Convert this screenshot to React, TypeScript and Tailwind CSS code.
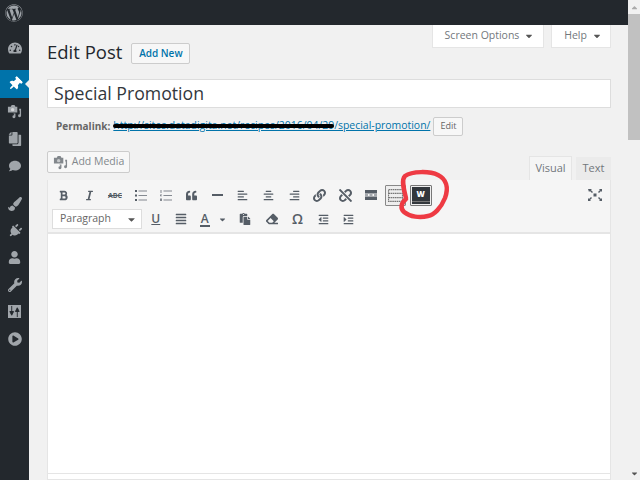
import type { ReactNode } from 'react';
import {
  FaWordpress, FaTachometerAlt, FaThumbtack, FaComment, FaPaintBrush, FaPlug, FaUser, FaWrench,
  FaPlayCircle, FaBold, FaItalic, FaQuoteLeft, FaAlignLeft, FaAlignCenter, FaAlignRight,
  FaLink, FaUnlink, FaAlignJustify, FaPaste, FaEraser, FaOutdent, FaIndent, FaCopy, FaCaretDown, FaCaretUp,
} from 'react-icons/fa';

const font = "font-['Open_Sans',sans-serif]";

function MediaIcon({ className }: { className?: string }) {
  return (
    <svg viewBox="0 0 16 16" className={className} fill="currentColor">
      <path d="M1 3h3l1-2h3l1 2h2v6H1z" />
      <circle cx="6" cy="6" r="1.800" fill="#fff" fillOpacity="0.55" />
      <path d="M13 5h2v7.500a1.600 1.600 0 1 1-1.400-1.600V7h-.6zM7 10h2v3.500a1.600 1.600 0 1 1-1.400-1.600V11H7z" />
    </svg>
  );
}

function SlidersIcon() {
  return (
    <svg viewBox="0 0 14 14" className="w-[13px] h-[13px]">
      <rect width="14" height="14" fill="#a0a5aa" />
      <path d="M4 1v8M2 7l2 4 2-4zM10 13V5M8 7l2-4 2 4z" fill="#23282d" stroke="#23282d" />
    </svg>
  );
}

function BulletList() {
  return (
    <svg viewBox="0 0 12 11" className="w-[12px] h-[11px]" fill="currentColor">
      <path d="M0 0h2v2H0zM0 4.500h2v2H0zM0 9h2v2H0z" />
      <path d="M3.500.500H12v1H3.500zM3.500 5H12v1H3.500zM3.500 9.500H12v1H3.500z" fillOpacity="0.7" />
    </svg>
  );
}

function NumberList() {
  return (
    <svg viewBox="0 0 12 11" className="w-[12px] h-[11px]" fill="currentColor">
      <path d="M.5 0h1v3h-1zM0 4.500h2v.6H1v.5h1v.6H0zM0 8.500h2v2.500H0z" fillOpacity="0.7" />
      <path d="M3.500.500H12v1H3.500zM3.500 5H12v1H3.500zM3.500 9.500H12v1H3.500z" fillOpacity="0.7" />
    </svg>
  );
}

const menuItems: { icon: ReactNode; cls: string }[] = [
  { icon: <FaTachometerAlt size={14} />, cls: 'mt-[9px]' },
  { icon: <FaThumbtack size={14} className="rotate-45" />, cls: 'mt-[9px] h-[28px] bg-[#0073aa] text-white' },
  { icon: <MediaIcon className="w-[15px] h-[15px]" />, cls: '' },
  { icon: <FaCopy size={14} className="scale-x-[-1]" />, cls: '' },
  { icon: <FaComment size={12} />, cls: '' },
  { icon: <FaPaintBrush size={14} />, cls: 'mt-[11px]' },
  { icon: <FaPlug size={14} className="rotate-45" />, cls: '' },
  { icon: <FaUser size={13} />, cls: '' },
  { icon: <FaWrench size={14} />, cls: '' },
  { icon: <SlidersIcon />, cls: '' },
  { icon: <FaPlayCircle size={14} />, cls: '' },
];

function Sidebar() {
  return (
    <div className="w-[29px] shrink-0 bg-[#23282d] text-[#a0a5aa] flex flex-col">
      {menuItems.map((m, i) => (
        <div key={i} className={`relative h-[27px] flex items-center justify-center ${m.cls}`}>
          {m.icon}
          {i === 1 && (
            <span className="absolute right-0 top-[10px] border-y-[4px] border-r-[4px] border-y-transparent border-r-[#f1f1f1]" />
          )}
        </div>
      ))}
    </div>
  );
}

function Tb({ children, cls = 'w-[25.6px]' }: { children: ReactNode; cls?: string }) {
  return <div className={`h-[20px] flex items-center justify-center shrink-0 text-[#555d66] ${cls}`}>{children}</div>;
}

function Toolbar() {
  return (
    <div className="h-[54px] shrink-0 bg-[#f5f5f5] border-b-2 border-[#e5e5e5] px-[3px] pt-[5px] flex flex-col">
      <div className="h-[20px] flex items-center">
        <Tb><FaBold size={11} /></Tb>
        <Tb><FaItalic size={11} /></Tb>
        <Tb><span className="text-[7px] font-bold line-through leading-none">ABC</span></Tb>
        <Tb><BulletList /></Tb>
        <Tb><NumberList /></Tb>
        <Tb><FaQuoteLeft size={11} /></Tb>
        <Tb><span className="block w-[11px] h-[2px] bg-[#555d66]" /></Tb>
        <Tb><FaAlignLeft size={11} /></Tb>
        <Tb><FaAlignCenter size={11} /></Tb>
        <Tb><FaAlignRight size={11} /></Tb>
        <Tb><FaLink size={13} /></Tb>
        <Tb><FaUnlink size={13} /></Tb>
        <Tb>
          <svg viewBox="0 0 12 10" className="w-[12px] h-[10px]" fill="currentColor">
            <path d="M0 0h12v3.500H0zM0 4.500h3v1H0zM4.500 4.500h3v1h-3zM9 4.500h3v1H9zM0 6.500h12V10H0z" />
          </svg>
        </Tb>
        <div className="w-[21px] h-[21px] ml-[1px] border border-[#888] rounded-[1px] bg-[#eee] flex items-center justify-center text-[#777]">
          <svg viewBox="0 0 14 12" className="w-[15px] h-[13px]" fill="none" stroke="currentColor" strokeWidth="1">
            <path d="M.5.500h13v11H.5zM.5 4h13M.5 8h13" strokeDasharray="1.500 .5" />
          </svg>
        </div>
        <div className="w-[22px] h-[21px] ml-[4px] border border-[#777] rounded-[1px] p-[1px] bg-[#eee]">
          <div className="w-full h-full bg-[#32373c] flex flex-col items-center pt-[2px] text-white">
            <span className="text-[8px] leading-[9px] font-extrabold">W</span>
            <span className="block mt-[3px] w-full h-[1px] bg-[#777]" />
          </div>
        </div>
        <div className="ml-auto mr-[5px] text-[#555d66]">
          <svg viewBox="0 0 14 12" className="w-[14px] h-[12px]" fill="currentColor">
            <path d="M0 0h4L2.900 1.100 5 3 4 4 1.900 2 1 3zM14 0v3l-1-1-2 2-1-1 2-1.900L10.900 0zM0 12V9l1 1 2-2 1 1-2 2 1 1zM14 12h-3l1-1-2-2 1-1 2 2 1-1zM5.500 4.500h3v3h-3z" />
          </svg>
        </div>
      </div>
      <div className="h-[20px] mt-[4px] flex items-center">
        <div className="w-[90px] h-[20px] ml-[1px] mr-[1px] bg-white border border-[#ddd] flex items-center justify-between pl-[7px] pr-[4px] text-[10.500px] text-[#666]">
          Paragraph
          <FaCaretDown size={11} className="text-[#555]" />
        </div>
        <Tb><span className="text-[12px] font-semibold underline leading-none">U</span></Tb>
        <Tb><FaAlignJustify size={12} /></Tb>
        <Tb cls="w-[21px]"><span className="text-[12px] font-semibold leading-[13px] border-b-2 border-[#555d66] px-[1px]">A</span></Tb>
        <Tb cls="w-[15px]"><FaCaretDown size={9} /></Tb>
        <Tb cls="w-[29px]"><FaPaste size={12} /></Tb>
        <Tb><FaEraser size={12} /></Tb>
        <Tb><span className="text-[14px] font-semibold leading-none">Ω</span></Tb>
        <Tb><FaOutdent size={11} /></Tb>
        <Tb><FaIndent size={11} /></Tb>
      </div>
    </div>
  );
}

export default function App() {
  return (
    <div className={`relative w-[640px] h-[480px] overflow-hidden bg-[#f1f1f1] flex flex-col ${font}`}>
      <div className="h-[25px] w-[628px] shrink-0 bg-[#23282d] pl-[5px] flex items-center text-[#a0a5aa]">
        <FaWordpress size={18} />
      </div>
      <div className="flex flex-1 min-h-0">
        <Sidebar />
        <div className="w-[599px] shrink-0 pl-[18px] pr-[17px] flex flex-col">
          <div className="flex justify-end gap-[7px] text-[10.500px] text-[#72777c]">
            <div className="w-[112px] h-[23px] bg-white border-b border-x border-[#e5e5e5] flex items-center justify-center gap-[5px] pl-[3px]">
              Screen Options <FaCaretDown size={10} className="text-[#555]" />
            </div>
            <div className="w-[60px] h-[23px] bg-white border-b border-x border-[#e5e5e5] flex items-center justify-center gap-[5px] pl-[4px]">
              Help <FaCaretDown size={10} className="text-[#555]" />
            </div>
          </div>
          <div className="mt-[-6px] flex items-center h-[22px]">
            <h1 className="text-[18.500px] text-[#23282d] leading-none -mt-[2px]">Edit Post</h1>
            <div className="ml-[9px] h-[21px] w-[59px] border border-[#ccc] rounded-[2px] bg-[#f7f7f7] text-[#0073aa] text-[10px] font-semibold flex items-center justify-center">
              Add New
            </div>
          </div>
          <div className="mt-[15px] h-[29px] bg-white border border-[#ddd] pl-[6px] flex items-center text-[17.700px] text-[#32373c]">
            Special Promotion
          </div>
          <div className="mt-[8px] h-[20px] pl-[9px] flex items-center">
            <span className="font-bold text-[#666] text-[10px]">Permalink:</span>
            <span className="relative ml-[3px] text-[#0073aa] underline whitespace-nowrap text-[10.450px]">
              http://sites.datadigita.net/recipes/2016/04/29/special-promotion/
              <span className="absolute left-0 top-[6px] w-[221px] h-[4px] bg-black rounded-full" />
            </span>
            <div className="ml-[3px] h-[19px] w-[30px] border border-[#ccc] rounded-[2px] bg-[#f7f7f7] text-[#666] text-[9px] flex items-center justify-center">
              Edit
            </div>
          </div>
          <div className="mt-[15px] flex items-end justify-between h-[29px] relative">
            <div className="absolute top-0 left-0 w-[83px] h-[22px] border border-[#ccc] rounded-[2px] bg-[#f7f7f7] text-[#82878c] text-[10.500px] flex items-center justify-center gap-[4px]">
              <MediaIcon className="w-[15px] h-[15px]" /> Add Media
            </div>
            <div className="ml-auto flex items-end text-[11px] text-[#72777c] gap-[4px]">
              <div className="w-[43px] h-[24px] bg-[#f5f5f5] border border-b-0 border-[#e5e5e5] flex items-center justify-center">Visual</div>
              <div className="w-[35px] h-[23px] bg-[#ebebeb] flex items-center justify-center">Text</div>
            </div>
          </div>
          <div className="flex-1 border border-t-0 border-[#e5e5e5] bg-white flex flex-col">
            <Toolbar />
            <div className="h-[240px] shrink-0 border-b border-[#e5e5e5]" />
          </div>
        </div>
        <div className="w-[12px] -mt-[25px] shrink-0 bg-[#f1f1f1] flex flex-col items-center text-[#777]">
          <FaCaretUp size={9} className="mt-[3px] text-[#aaa]" />
          <div className="w-full h-[126px] mt-[2px] bg-[#c1c1c1]" />
          <FaCaretDown size={9} className="mt-auto mb-[2px] text-[#555]" />
        </div>
      </div>
      <svg viewBox="0 0 640 480" className="absolute inset-0 w-[640px] h-[480px] pointer-events-none" fill="none">
        <path
          d="M406 198C404 190 401 180 405 176C412 171 430 171 438 175C446 179 449 187 445 198C441 208 434 215 428 216C420 218 410 217 404 212C400 208 401 203 406 199"
          stroke="#ee3a43"
          strokeWidth="4.500"
          strokeLinecap="round"
        />
      </svg>
    </div>
  );
}
